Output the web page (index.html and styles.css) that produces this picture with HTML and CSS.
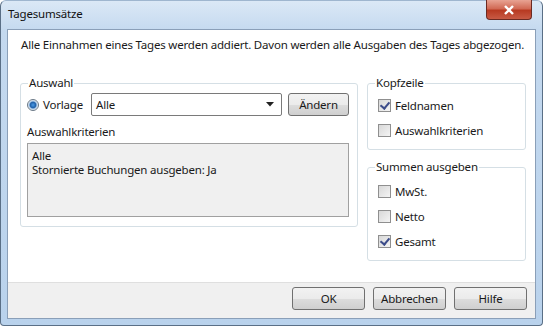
FILE: index.html
```html
<!DOCTYPE html>
<html lang="de">
<head>
  <meta charset="UTF-8">
  <title>Tagesumsätze</title>
  <link rel="stylesheet" href="styles.css">
</head>
<body>
  <div class="window">
    <div class="titlebar">
      <span class="title">Tagesumsätze</span>
      <div class="close">
        <svg width="12" height="10" viewBox="0 0 12 10"><path d="M2 1 L10 9 M10 1 L2 9" stroke="#fff" stroke-width="2.4"/></svg>
      </div>
    </div>

    <div class="client">
      <div class="content">
        <p class="intro">Alle Einnahmen eines Tages werden addiert. Davon werden alle Ausgaben des Tages abgezogen.</p>

        <div class="columns">
          <!-- Auswahl -->
          <fieldset class="group group-auswahl">
            <legend>Auswahl</legend>
            <div class="row">
              <label class="radio"><span class="radio-dot"></span>Vorlage</label>
              <div class="select">
                <span>Alle</span>
                <svg width="8" height="5" viewBox="0 0 8 5"><path d="M0 0 H8 L4 4.5 Z" fill="#222"/></svg>
              </div>
              <button class="btn btn-small">Ändern</button>
            </div>
            <div class="sublabel">Auswahlkriterien</div>
            <div class="textbox">
              <div>Alle</div>
              <div>Stornierte Buchungen ausgeben: Ja</div>
            </div>
          </fieldset>

          <div class="side">
            <fieldset class="group group-kopf">
              <legend>Kopfzeile</legend>
              <label class="check"><span class="box checked"></span>Feldnamen</label>
              <label class="check"><span class="box"></span>Auswahlkriterien</label>
            </fieldset>
            <fieldset class="group group-summen">
              <legend>Summen ausgeben</legend>
              <label class="check"><span class="box"></span>MwSt.</label>
              <label class="check"><span class="box"></span>Netto</label>
              <label class="check"><span class="box checked"></span>Gesamt</label>
            </fieldset>
          </div>
        </div>
      </div>

      <div class="footer">
        <button class="btn">OK</button>
        <button class="btn">Abbrechen</button>
        <button class="btn">Hilfe</button>
      </div>
    </div>
  </div>
</body>
</html>
```

FILE: styles.css
```css
body {
  margin: 0;
  font-family: "Noto Sans", sans-serif;
  font-size: 11.5px;
  letter-spacing: -0.2px;
  line-height: 16px;
  color: #1a1a1a;
  background: #fff;
}

.window {
  width: 543px;
  height: 326px;
  box-sizing: border-box;
  background: linear-gradient(to bottom, #dbe8f6 0px, #c4d9ef 30px, #b9d2ec 100%);
  border: 1px solid #5a6f86;
  border-top-color: #9fb6cf;
  border-radius: 6px 6px 4px 4px;
  display: flex;
  flex-direction: column;
}

.titlebar {
  height: 28px;
  flex-shrink: 0;
  display: flex;
  justify-content: space-between;
  align-items: flex-start;
  padding: 0 10px 0 7px;
}

.title {
  margin-top: 5px;
  color: #111;
}

.close {
  width: 44px;
  height: 19px;
  margin-top: -1px;
  border: 1px solid #6b2a22;
  border-top: none;
  border-radius: 0 0 4px 4px;
  background: linear-gradient(to bottom, #e8a393 0%, #d16a55 45%, #b83a22 55%, #c85a44 100%);
  display: flex;
  align-items: center;
  justify-content: center;
}

.client {
  flex: 1;
  margin: 0 6px 6px 6px;
  border: 1px solid #8a9fb8;
  background: #fff;
  display: flex;
  flex-direction: column;
}

.content {
  flex: 1;
  padding: 0 12px;
}

.intro {
  margin: 7px 0 0 1px;
  white-space: nowrap;
}

.columns {
  display: flex;
  gap: 9px;
  margin-top: 22px;
}

.group {
  margin: 0;
  box-sizing: border-box;
  border: 1px solid #d5dfe5;
  border-radius: 3px;
  padding: 0 6px;
}

.group legend {
  padding: 0 1px;
  margin-left: 1px;
  line-height: 16px;
}

.group-auswahl {
  width: 337px;
  height: 152px;
  padding: 2px 8px 0 6px;
}

.row {
  display: flex;
  align-items: center;
  height: 23px;
}

.radio {
  display: flex;
  align-items: center;
  gap: 4px;
  width: 64px;
  flex-shrink: 0;
}

.radio-dot {
  flex-shrink: 0;
  width: 12px;
  height: 12px;
  box-sizing: border-box;
  border-radius: 50%;
  border: 1px solid #6a7886;
  background: radial-gradient(circle, #4a9be6 0px, #1f5fa8 2.8px, #9dbfe2 3.8px, #eef3f8 5px);
}

.select {
  flex-shrink: 0;
  box-sizing: border-box;
  width: 191px;
  height: 23px;
  border: 1px solid #7a7a7a;
  border-radius: 2px;
  background: #fff;
  display: flex;
  align-items: center;
  justify-content: space-between;
  padding: 0 7px 0 4px;
}

.btn {
  font-family: inherit;
  font-size: 11.5px;
  letter-spacing: -0.2px;
  color: #1a1a1a;
  height: 23px;
  border: 1px solid #707070;
  border-radius: 3px;
  background: linear-gradient(to bottom, #f2f2f2 0%, #ebebeb 50%, #dddddd 51%, #cfcfcf 100%);
  padding: 0;
}

.btn-small {
  width: 61px;
  margin-left: 6px;
}

.sublabel {
  margin-top: 8px;
}

.textbox {
  box-sizing: border-box;
  height: 74px;
  margin-top: 3px;
  border: 1px solid #a0a0a0;
  background: #f0f0f0;
  padding: 5px 4px;
  line-height: 14px;
}

.side {
  display: flex;
  flex-direction: column;
  gap: 9px;
}

.group-kopf {
  width: 159px;
  height: 75px;
  padding-top: 2px;
}

.group-summen {
  width: 159px;
  height: 102px;
  padding-top: 4px;
}

.check {
  display: flex;
  align-items: center;
  gap: 4px;
  height: 25px;
  margin-left: 4px;
}

.box {
  flex-shrink: 0;
  width: 13px;
  height: 13px;
  box-sizing: border-box;
  border: 1px solid #8f8f8f;
  background: linear-gradient(135deg, #d8d8d8, #f4f4f4);
  position: relative;
}

.box.checked::after {
  content: "";
  position: absolute;
  left: 3px;
  top: 0px;
  width: 4px;
  height: 7px;
  border: solid #3c4c8a;
  border-width: 0 2px 2px 0;
  transform: rotate(40deg);
}

.footer {
  box-sizing: border-box;
  height: 36px;
  flex-shrink: 0;
  border-top: 1px solid #dfdfdf;
  background: #f0f0f0;
  display: flex;
  justify-content: flex-end;
  align-items: flex-start;
  gap: 8px;
  padding: 4px 8px 0 0;
}

.footer .btn {
  width: 73px;
}
```
